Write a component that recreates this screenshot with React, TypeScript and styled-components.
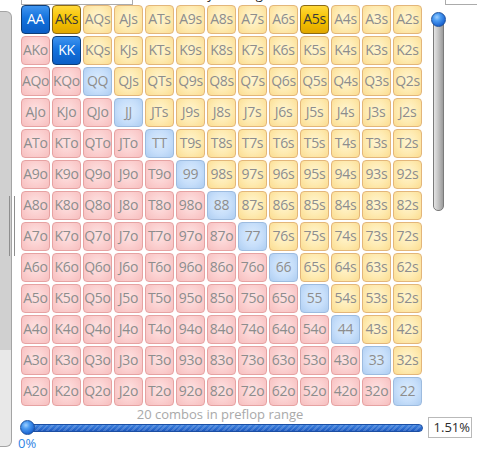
import React from "react";
import styled, { createGlobalStyle, css } from "styled-components";

const Global = createGlobalStyle`
  html, body { margin: 0; padding: 0; background: #ffffff; }
  body { font-family: "Open Sans", "Noto Sans", Arial, sans-serif; }
`;

const RANKS = "AKQJT98765432".split("");
const SELECTED = new Set(["AA", "KK", "AKs", "A5s"]);

type Kind = "pair" | "suited" | "offsuit";

const Page = styled.div`
  display: flex;
  width: 477px;
  height: 451px;
  overflow: hidden;
`;

const LeftRail = styled.div`
  width: 18px;
  flex: none;
  padding-top: 11px;
  box-sizing: border-box;
`;

const Splitter = styled.div`
  position: relative;
  width: 12px;
  height: 436px;
  box-sizing: border-box;
  border: 1px solid #a4a4a4;
  border-left: none;
  border-radius: 0 6px 6px 0;
  background: linear-gradient(to bottom, #d0d0d0 0, #d0d0d0 338px, #e8e8e8 338px);
`;

const Grip = styled.div`
  position: absolute;
  left: 9px;
  top: 184px;
  width: 4px;
  height: 60px;
  border-left: 1px solid #8e8e8e;
  border-right: 1px solid #8e8e8e;
`;

const Main = styled.div`
  display: flex;
  flex-direction: column;
  width: 459px;
  flex: none;
`;

const TopStrip = styled.div`
  display: flex;
  align-items: flex-start;
  height: 7px;
  overflow: hidden;
`;

const TopInput = styled.div<{ $w: number; $ml: number }>`
  width: ${(p) => p.$w}px;
  margin-left: ${(p) => p.$ml}px;
  height: 5px;
  box-sizing: border-box;
  border: 1px solid #ababab;
  border-top: none;
  background: #fff;
  flex: none;
`;

const TopLabel = styled.span`
  margin-top: -13px;
  margin-left: 38px;
  font-size: 13px;
  line-height: 15px;
  color: #222;
  white-space: nowrap;
  flex: none;
`;

const Body = styled.div`
  display: flex;
`;

const Grid = styled.div`
  display: grid;
  grid-template-columns: repeat(13, 29px);
  grid-auto-rows: 29px;
  gap: 2px;
  margin-left: 3px;
`;

const kindStyles: Record<Kind, ReturnType<typeof css>> = {
  offsuit: css`
    background: radial-gradient(ellipse at 50% 45%, #fde4e4 0%, #fbcfcf 55%, #f6bebe 100%);
    border-color: #e6a2a2;
    color: #8d8d8d;
  `,
  suited: css`
    background: radial-gradient(ellipse at 50% 45%, #fff6d2 0%, #feeab0 55%, #fbdc90 100%);
    border-color: #e3b67a;
    color: #8d8d8d;
  `,
  pair: css`
    background: radial-gradient(ellipse at 50% 45%, #dbecfd 0%, #c6defa 55%, #adcdf1 100%);
    border-color: #9dbbdf;
    color: #8d8d8d;
  `,
};

const selectedStyles: Record<Kind, ReturnType<typeof css>> = {
  pair: css`
    background: linear-gradient(to bottom, #3f95f0 0%, #1472dd 45%, #0a5ec6 100%);
    border-color: #0c3c77;
    color: #ffffff;
  `,
  suited: css`
    background: linear-gradient(to bottom, #ffd83a 0%, #f5c300 50%, #e2a800 100%);
    border-color: #8c6a14;
    color: #3a3a3a;
  `,
  offsuit: css`
    background: linear-gradient(to bottom, #f27a7a, #d84040);
    border-color: #7a1f1f;
    color: #ffffff;
  `,
};

const Cell = styled.div<{ $kind: Kind; $sel: boolean }>`
  box-sizing: border-box;
  border: 1px solid;
  border-radius: 4px;
  display: flex;
  align-items: center;
  justify-content: center;
  font-size: 14px;
  line-height: 1;
  padding-bottom: 1px;
  letter-spacing: -0.3px;
  white-space: nowrap;
  ${(p) => (p.$sel ? selectedStyles[p.$kind] : kindStyles[p.$kind])}
`;

const RightCol = styled.div`
  padding-left: 9px;
  padding-top: 7px;
`;

const VSlider = styled.div`
  position: relative;
  width: 15px;
  height: 199px;
  display: flex;
  justify-content: center;
  padding-top: 7px;
  box-sizing: border-box;
`;

const VTrack = styled.div`
  width: 11px;
  height: 100%;
  box-sizing: border-box;
  border: 1px solid #7b7b7b;
  border-radius: 5px;
  background: linear-gradient(to right, #e4e4e4 0%, #c6c6c6 45%, #9b9b9b 100%);
`;

const Thumb = styled.div<{ $top?: number; $left?: number }>`
  position: absolute;
  top: ${(p) => p.$top ?? 0}px;
  left: ${(p) => p.$left ?? 0}px;
  width: 15px;
  height: 15px;
  box-sizing: border-box;
  border-radius: 50%;
  border: 1px solid #1d519d;
  background: radial-gradient(circle at 38% 32%, #9fd0ff 0%, #4c9cf2 30%, #1e68d4 70%, #1550b0 100%);
`;

const Caption = styled.div`
  width: 404px;
  height: 11px;
  text-align: center;
  font-size: 13px;
  line-height: 17px;
  color: #a9a9a9;
  white-space: nowrap;
`;

const BottomRow = styled.div`
  display: flex;
  align-items: center;
  height: 21px;
`;

const HSlider = styled.div`
  position: relative;
  width: 403px;
  height: 15px;
  margin-left: 2px;
  display: flex;
  align-items: center;
  padding-left: 6px;
  box-sizing: border-box;
`;

const HTrack = styled.div`
  flex: 1;
  height: 8px;
  box-sizing: border-box;
  border: 1px solid #1b4ea3;
  border-radius: 4px;
  background: repeating-linear-gradient(-45deg, rgba(255, 255, 255, 0.16) 0 2px, transparent 2px 4px),
    linear-gradient(to bottom, #3f82de 0%, #2d6fd2 50%, #1d58bd 100%);
`;

const PercentBox = styled.div`
  width: 44px;
  height: 21px;
  margin-left: 5px;
  box-sizing: border-box;
  border: 1px solid #b9b9b9;
  background: #fff;
  font-size: 13px;
  line-height: 19px;
  text-align: right;
  padding-right: 1px;
  color: #2b2b2b;
`;

const ZeroLabel = styled.div`
  margin-top: -2px;
  font-size: 13px;
  line-height: 15px;
  color: #2f84e4;
`;

function handAt(i: number, j: number): { label: string; kind: Kind } {
  if (i === j) return { label: RANKS[i] + RANKS[j], kind: "pair" };
  if (j > i) return { label: RANKS[i] + RANKS[j] + "s", kind: "suited" };
  return { label: RANKS[j] + RANKS[i] + "o", kind: "offsuit" };
}

export default function App() {
  const cells: React.ReactNode[] = [];
  for (let i = 0; i < 13; i++) {
    for (let j = 0; j < 13; j++) {
      const h = handAt(i, j);
      cells.push(
        <Cell key={h.label} $kind={h.kind} $sel={SELECTED.has(h.label)}>
          {h.label}
        </Cell>
      );
    }
  }
  return (
    <>
      <Global />
      <Page>
        <LeftRail>
          <Splitter>
            <Grip />
          </Splitter>
        </LeftRail>
        <Main>
          <TopStrip>
            <TopInput $w={112} $ml={3} />
            <TopLabel>Sort by ranking</TopLabel>
            <TopInput $w={44} $ml={182} />
          </TopStrip>
          <Body>
            <Grid>{cells}</Grid>
            <RightCol>
              <VSlider>
                <VTrack />
                <Thumb $top={0} $left={0} />
              </VSlider>
            </RightCol>
          </Body>
          <Caption>20 combos in preflop range</Caption>
          <BottomRow>
            <HSlider>
              <HTrack />
              <Thumb $top={0} $left={0} />
            </HSlider>
            <PercentBox>1.51%</PercentBox>
          </BottomRow>
          <ZeroLabel>0%</ZeroLabel>
        </Main>
      </Page>
    </>
  );
}
